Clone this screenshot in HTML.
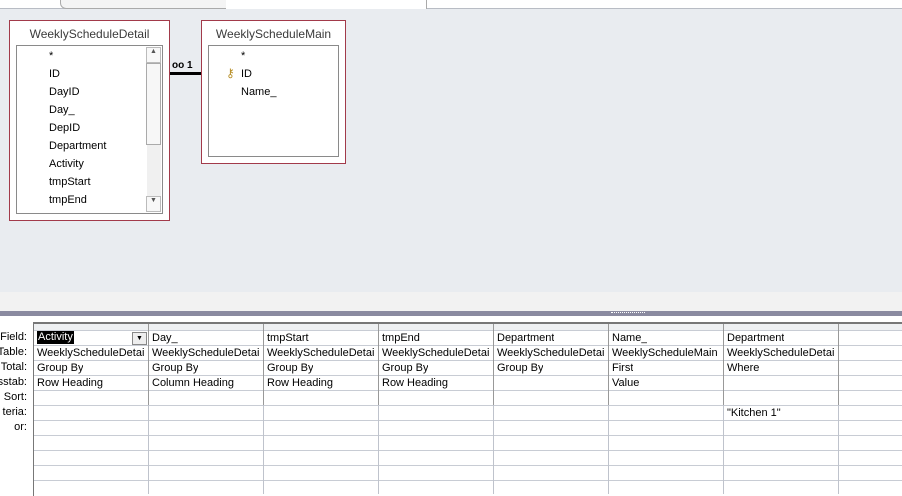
<!DOCTYPE html><html><head><style>
body{margin:0;width:902px;height:494px;overflow:hidden;background:#fff;font-family:"Liberation Sans",sans-serif;font-size:11px;color:#000;position:relative}
.a{position:absolute}
.tbl{position:absolute;border:1px solid #a23a4a;background:#fff}
.ttl{position:absolute;left:0;right:0;top:6px;text-align:center;color:#3a3a3a;font-size:12px}
.lst{position:absolute;border:1px solid #8a8a8a;background:#fff}
.it{position:absolute;font-size:11px}
.lbl{position:absolute;right:875px;font-size:11px;text-align:right}
.cell{position:absolute;font-size:11px;white-space:nowrap;overflow:hidden}
</style></head><body>
<div class="a" style="left:0;top:0;width:902px;height:8px;background:#fff;border-bottom:1px solid #b8bcc4"></div>
<div class="a" style="left:60px;top:0;width:165px;height:8px;border:1px solid #aaa;border-top:none;background:#f4f4f4;border-radius:0 0 0 6px"></div>
<div class="a" style="left:226px;top:0;width:200px;height:9px;background:#fff;border-right:1px solid #aaa"></div>
<div class="a" style="left:0;top:9px;width:902px;height:283px;background:#e9ecf0"></div>
<div class="a" style="left:0;top:292px;width:902px;height:19px;background:#f2f2f2"></div>
<div class="a" style="left:0;top:311px;width:902px;height:5px;background:#8a8aa0"></div>
<div class="a" style="left:611px;top:312px;width:34px;height:2px;border-top:1px dotted #fff"></div>

<div class="tbl" style="left:9px;top:20px;width:159px;height:199px">
<div class="ttl">WeeklyScheduleDetail</div>
<div class="lst" style="left:6px;top:24px;width:145px;height:167px">
<div class="a" style="right:1px;top:1px;width:14px;height:164px;background:#f0f0f0"></div>
<div class="a" style="right:1px;top:1px;width:13px;height:14px;border:1px solid #bbb;background:#f8f8f8;font-size:7px;text-align:center;color:#555">▲</div>
<div class="a" style="right:1px;top:17px;width:13px;height:80px;border:1px solid #aaa;background:#f7f7f7"></div>
<div class="a" style="right:1px;bottom:1px;width:13px;height:14px;border:1px solid #bbb;background:#f8f8f8;font-size:7px;text-align:center;color:#555">▼</div>
<div class="it" style="left:32px;top:4px">*</div>
<div class="it" style="left:32px;top:22px">ID</div>
<div class="it" style="left:32px;top:40px">DayID</div>
<div class="it" style="left:32px;top:58px">Day_</div>
<div class="it" style="left:32px;top:76px">DepID</div>
<div class="it" style="left:32px;top:94px">Department</div>
<div class="it" style="left:32px;top:112px">Activity</div>
<div class="it" style="left:32px;top:130px">tmpStart</div>
<div class="it" style="left:32px;top:148px">tmpEnd</div>
</div></div>

<div class="tbl" style="left:201px;top:20px;width:143px;height:142px">
<div class="ttl">WeeklyScheduleMain</div>
<div class="lst" style="left:6px;top:24px;width:129px;height:110px">
<div class="it" style="left:32px;top:4px">*</div>
<div class="it" style="left:17px;top:20px;color:#b8902a;font-size:12px">⚷</div>
<div class="it" style="left:32px;top:22px">ID</div>
<div class="it" style="left:32px;top:40px">Name_</div>
</div></div>
<div class="a" style="left:170px;top:72px;width:31px;height:3px;background:#000"></div>
<div class="a" style="left:172px;top:60px;font-size:10px;font-weight:bold">oo 1</div>

<div class="a" style="left:33px;top:322px;width:869px;height:172px;border-top:2px solid #777;border-left:1px solid #777"></div>
<div class="a" style="left:34px;top:324px;width:868px;height:6px;background:#eef0f2"></div>
<svg class="a" style="left:0;top:0" width="902" height="494">
<g stroke="#c8ccd4" stroke-width="1">
<line x1="34" y1="330.5" x2="902" y2="330.5"/><line x1="34" y1="345.5" x2="902" y2="345.5"/><line x1="34" y1="360.5" x2="902" y2="360.5"/><line x1="34" y1="375.5" x2="902" y2="375.5"/><line x1="34" y1="390.5" x2="902" y2="390.5"/><line x1="34" y1="405.5" x2="902" y2="405.5"/><line x1="34" y1="420.5" x2="902" y2="420.5"/><line x1="34" y1="435.5" x2="902" y2="435.5"/><line x1="34" y1="450.5" x2="902" y2="450.5"/><line x1="34" y1="465.5" x2="902" y2="465.5"/><line x1="34" y1="480.5" x2="902" y2="480.5"/>
</g>
<g stroke="#bfc3cc"><line x1="148.5" y1="324" x2="148.5" y2="494"/><line x1="263.5" y1="324" x2="263.5" y2="494"/><line x1="378.5" y1="324" x2="378.5" y2="494"/><line x1="493.5" y1="324" x2="493.5" y2="494"/><line x1="608.5" y1="324" x2="608.5" y2="494"/><line x1="723.5" y1="324" x2="723.5" y2="494"/><line x1="838.5" y1="324" x2="838.5" y2="494"/></g>
<g stroke="#999"><line x1="148.5" y1="324" x2="148.5" y2="405"/><line x1="263.5" y1="324" x2="263.5" y2="405"/><line x1="378.5" y1="324" x2="378.5" y2="405"/><line x1="493.5" y1="324" x2="493.5" y2="405"/><line x1="608.5" y1="324" x2="608.5" y2="405"/><line x1="723.5" y1="324" x2="723.5" y2="405"/><line x1="838.5" y1="324" x2="838.5" y2="405"/></g>
</svg>
<div class="lbl" style="top:331px">Field:</div>
<div class="lbl" style="top:346px">Table:</div>
<div class="lbl" style="top:361px">Total:</div>
<div class="lbl" style="top:376px">sstab:</div>
<div class="lbl" style="top:391px">Sort:</div>
<div class="lbl" style="top:406px">teria:</div>
<div class="lbl" style="top:421px">or:</div>

<div class="a" style="left:37px;top:331px;background:#000;color:#fff;font-size:11px;padding:0 1px;height:13px">Activity</div>
<div class="a" style="left:132px;top:332px;width:13px;height:11px;border:1px solid #888;background:#eee;font-size:7px;text-align:center;line-height:11px">▼</div>
<div class="cell" style="left:37px;top:347px;width:111px">WeeklyScheduleDetai</div>
<div class="cell" style="left:37px;top:362px">Group By</div>
<div class="cell" style="left:37px;top:377px">Row Heading</div>

<div class="cell" style="left:152px;top:332px">Day_</div>
<div class="cell" style="left:152px;top:347px;width:111px">WeeklyScheduleDetai</div>
<div class="cell" style="left:152px;top:362px">Group By</div>
<div class="cell" style="left:152px;top:377px">Column Heading</div>

<div class="cell" style="left:267px;top:332px">tmpStart</div>
<div class="cell" style="left:267px;top:347px;width:111px">WeeklyScheduleDetai</div>
<div class="cell" style="left:267px;top:362px">Group By</div>
<div class="cell" style="left:267px;top:377px">Row Heading</div>

<div class="cell" style="left:382px;top:332px">tmpEnd</div>
<div class="cell" style="left:382px;top:347px;width:111px">WeeklyScheduleDetai</div>
<div class="cell" style="left:382px;top:362px">Group By</div>
<div class="cell" style="left:382px;top:377px">Row Heading</div>

<div class="cell" style="left:497px;top:332px">Department</div>
<div class="cell" style="left:497px;top:347px;width:111px">WeeklyScheduleDetai</div>
<div class="cell" style="left:497px;top:362px">Group By</div>

<div class="cell" style="left:612px;top:332px">Name_</div>
<div class="cell" style="left:612px;top:347px;width:111px">WeeklyScheduleMain</div>
<div class="cell" style="left:612px;top:362px">First</div>
<div class="cell" style="left:612px;top:377px">Value</div>

<div class="cell" style="left:727px;top:332px">Department</div>
<div class="cell" style="left:727px;top:347px;width:111px">WeeklyScheduleDetai</div>
<div class="cell" style="left:727px;top:362px">Where</div>
<div class="cell" style="left:727px;top:407px">"Kitchen 1"</div>
</body></html>
